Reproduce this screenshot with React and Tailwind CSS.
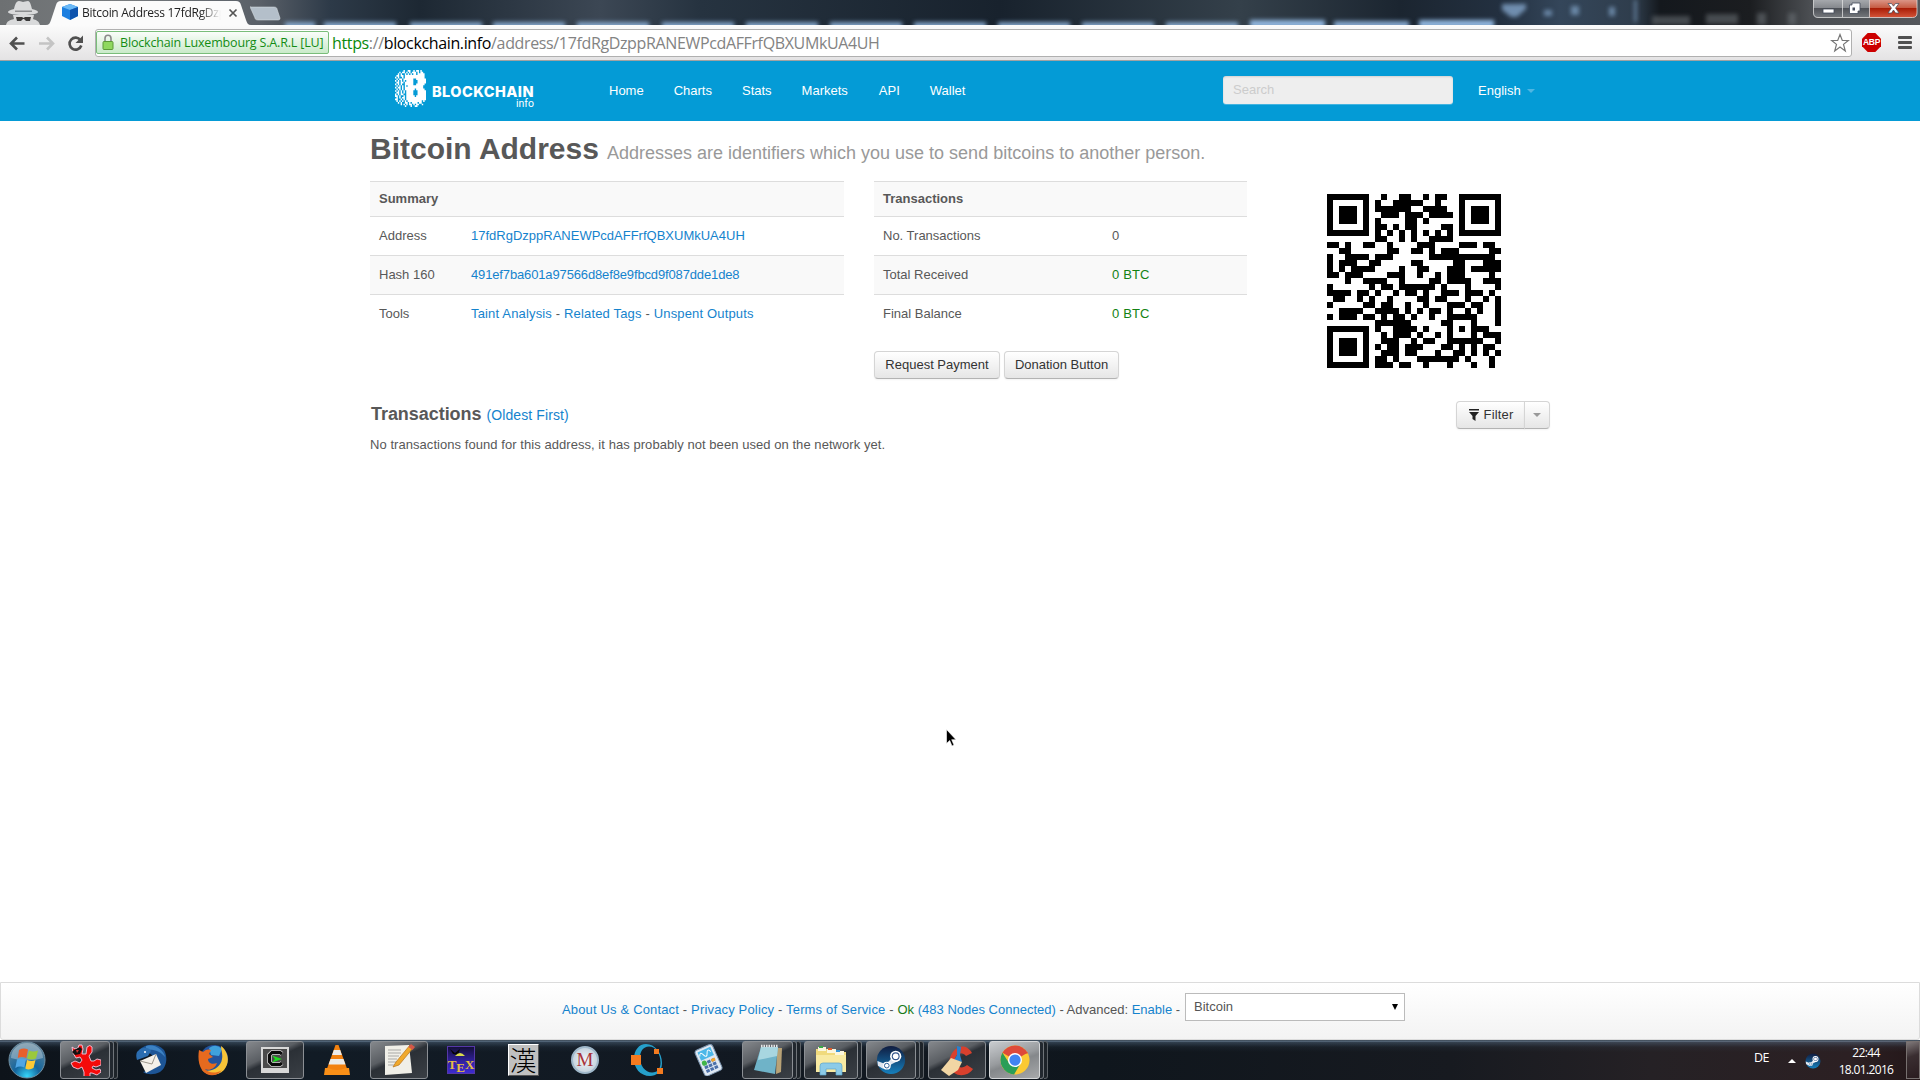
import React from "react";

const ADDRESS = "17fdRgDzppRANEWPcdAFFrfQBXUMkUA4UH";

/* ---------- QR code (version 3, level L, mask 7) ---------- */
function buildQr(text) {
  const N = 29;
  const bits = [];
  const push = (v, n) => {
    for (let i = n - 1; i >= 0; i--) bits.push((v >> i) & 1);
  };
  push(4, 4);
  push(text.length, 8);
  for (const ch of text) push(ch.charCodeAt(0), 8);
  push(0, 4);
  while (bits.length % 8) bits.push(0);
  const data = [];
  for (let i = 0; i < bits.length; i += 8) data.push(parseInt(bits.slice(i, i + 8).join(""), 2));
  for (let pad = 0xec; data.length < 55; pad ^= 0xec ^ 0x11) data.push(pad);

  const mul = (a, b) => {
    let r = 0;
    for (let i = 7; i >= 0; i--) {
      r = (r << 1) ^ ((r >> 7) * 0x11d);
      r ^= ((b >> i) & 1) * a;
    }
    return r;
  };
  const gen = new Array(15).fill(0);
  gen[14] = 1;
  let root = 1;
  for (let i = 0; i < 15; i++) {
    for (let j = 0; j < 15; j++) {
      gen[j] = mul(gen[j], root);
      if (j + 1 < 15) gen[j] ^= gen[j + 1];
    }
    root = mul(root, 2);
  }
  const ecc = new Array(15).fill(0);
  for (const b of data) {
    const f = b ^ ecc.shift();
    ecc.push(0);
    gen.forEach((g, i) => (ecc[i] ^= mul(g, f)));
  }
  const all = data.concat(ecc);

  const m = Array.from({ length: N }, () => new Array(N).fill(0));
  const fixed = Array.from({ length: N }, () => new Array(N).fill(false));
  const set = (x, y, v) => {
    if (x < 0 || y < 0 || x >= N || y >= N) return;
    m[y][x] = v ? 1 : 0;
    fixed[y][x] = true;
  };
  for (let i = 0; i < N; i++) {
    set(6, i, i % 2 === 0);
    set(i, 6, i % 2 === 0);
  }
  for (const [cx, cy] of [[3, 3], [N - 4, 3], [3, N - 4]])
    for (let dy = -4; dy <= 4; dy++)
      for (let dx = -4; dx <= 4; dx++) {
        const d = Math.max(Math.abs(dx), Math.abs(dy));
        set(cx + dx, cy + dy, d !== 2 && d !== 4);
      }
  for (let dy = -2; dy <= 2; dy++)
    for (let dx = -2; dx <= 2; dx++) set(22 + dx, 22 + dy, Math.max(Math.abs(dx), Math.abs(dy)) !== 1);
  const fmt = 0b110100101110110;
  const fb = (i) => (fmt >> i) & 1;
  for (let i = 0; i <= 5; i++) set(8, i, fb(i));
  set(8, 7, fb(6));
  set(8, 8, fb(7));
  set(7, 8, fb(8));
  for (let i = 9; i < 15; i++) set(14 - i, 8, fb(i));
  for (let i = 0; i < 8; i++) set(N - 1 - i, 8, fb(i));
  for (let i = 8; i < 15; i++) set(8, N - 15 + i, fb(i));
  set(8, N - 8, 1);

  let k = 0;
  for (let right = N - 1; right >= 1; right -= 2) {
    if (right === 6) right = 5;
    for (let v = 0; v < N; v++)
      for (let j = 0; j < 2; j++) {
        const x = right - j;
        const y = ((right + 1) & 2) === 0 ? N - 1 - v : v;
        if (fixed[y][x]) continue;
        let b = 0;
        if (k < all.length * 8) b = (all[k >> 3] >> (7 - (k & 7))) & 1;
        k++;
        if ((((x + y) % 2) + ((x * y) % 3)) % 2 === 0) b ^= 1;
        m[y][x] = b;
      }
  }
  return m;
}

function QrCode({ text }) {
  const d = buildQr(text)
    .flatMap((row, y) => row.map((v, x) => (v ? `M${x} ${y}h1v1h-1z` : "")))
    .join("");
  return (
    <svg viewBox="0 0 29 29" className="h-[174px] w-[174px]" shapeRendering="crispEdges">
      <path d={d} fill="#000" />
    </svg>
  );
}

/* ---------- Browser chrome ---------- */
function TitleBar() {
  return (
    <div className="relative h-[25px] shrink-0 overflow-hidden bg-[linear-gradient(90deg,#6d7072_0px,#777b7e_120px,#5a6068_260px,#2d3a48_330px,#1d2833_420px,#3c4754_600px,#263340_700px,#18222d_1000px,#34404a_1240px,#1b2530_1400px,#233040_1500px,#34465a_1560px,#2f3d4c_1635px,#14181d_1660px,#1b1d20_1750px,#4b4e52_1810px,#55585c_1920px)]">
      <svg className="absolute inset-0" width="1920" height="25">
        <defs>
          <filter id="soft" x="-20%" y="-100%" width="140%" height="300%">
            <feGaussianBlur stdDeviation="2" />
          </filter>
        </defs>
        <g filter="url(#soft)" fill="#8fb4dc">
          {[285, 324, 410, 493, 577, 662, 746, 830, 914, 998, 1082, 1166].map((x, i) => (
            <rect key={x} x={x} y="22" width={i === 0 ? 30 : 72} height="8" opacity="0.85" />
          ))}
          <rect x="1250" y="20" width="75" height="8" />
          <rect x="1334" y="21" width="75" height="8" opacity="0.9" />
          <rect x="1419" y="20" width="75" height="8" />
          <path d="M1502 4h24v5l-9 8h-6l-9-7z" opacity="0.7" />
          <rect x="1544" y="10" width="8" height="6" opacity="0.6" />
          <rect x="1571" y="6" width="8" height="9" opacity="0.6" />
          <rect x="1609" y="7" width="6" height="9" opacity="0.6" />
          <rect x="1634" y="0" width="3" height="22" opacity="0.5" />
        </g>
        <g filter="url(#soft)" fill="#6d7378" opacity="0.55">
          <rect x="1652" y="16" width="38" height="9" />
          <rect x="1706" y="14" width="32" height="10" />
          <rect x="1757" y="13" width="9" height="12" />
          <rect x="1788" y="13" width="8" height="12" />
        </g>
        {/* incognito figure */}
        <g fill="#d9dadb">
          <path d="M14 9c1-4 2-8 5-8 2 0 3 1 4 1s3-1 5-1c2 0 3 4 4 8 4 1 6 2 6 3 0 2-7 3-15 3S8 14 8 12c0-1 2-2 6-3z" />
          <path d="M6 25c1-4 4-5 8-6l-1-4h21l-1 4c3 1 6 2 7 6z" />
        </g>
        <path d="M15 10.500h17v1.500H15z" fill="#8b8d8f" />
        <path d="M16 17h6l1.500 1 1.500-1h6l-1 4h-4l-2-2h-1l-2 2h-4z" fill="#3b3b3b" />
        {/* tab */}
        <path d="M46 25c3 0 4-2 5-5l5-15c1-3 2-4 5-4h175c3 0 4 1 5 4l5 15c1 3 2 5 5 5z" fill="#fbfbfb" />
        <path d="M62 7l8-3 8 3v9l-8 4-8-4z" fill="#1c7fe0" />
        <path d="M62 7l8-3 8 3-8 3z" fill="#69b8f6" />
        <path d="M70 10l8-3v9l-8 4z" fill="#0d53ad" />
        <path d="M229.500 9.500l7 7M236.500 9.500l-7 7" stroke="#555" strokeWidth="1.700" />
        {/* new tab */}
        <path d="M250 7h24c2 0 3 1 3 2l3 9c0 1 0 2-2 2h-20c-2 0-3-1-3-2l-4-9c-1-1 0-2 0-2z" fill="#b4bfca" stroke="#dde3e8" strokeOpacity=".5" />
        {/* window buttons */}
        <defs>
          <linearGradient id="wb" x1="0" y1="0" x2="0" y2="1">
            <stop offset="0" stopColor="#a9acb0" />
            <stop offset=".48" stopColor="#85888d" />
            <stop offset=".5" stopColor="#4d5056" />
            <stop offset="1" stopColor="#74777b" />
          </linearGradient>
          <linearGradient id="wr" x1="0" y1="0" x2="0" y2="1">
            <stop offset="0" stopColor="#dd9c8e" />
            <stop offset=".48" stopColor="#c65a42" />
            <stop offset=".5" stopColor="#a81c05" />
            <stop offset="1" stopColor="#d4553a" />
          </linearGradient>
        </defs>
        <path d="M1813.500-1v14q0 4.500 4.500 4.500h51v-18.500z" fill="url(#wb)" />
        <path d="M1869.500-1v18.500h43q4.500 0 4.500-4.500v-14z" fill="url(#wr)" />
        <path d="M1813.500-1v14q0 4.500 4.500 4.500h94.500q4.500 0 4.500-4.500v-14M1842.500 0v17M1869.500 0v17" fill="none" stroke="#e3e3e3" strokeOpacity=".75" />
        <rect x="1823" y="9" width="11" height="4" fill="#fff" stroke="#444b5a" strokeWidth=".8" />
        <path d="M1852 3h8v8h-2v2.500h-8.500v-8.500h2.500z" fill="#fff" stroke="#444b5a" strokeWidth=".8" />
        <rect x="1852.500" y="7.500" width="2.500" height="3" fill="#444b5a" />
        <path d="M1888 3.500h3.500l2 2.700 2-2.700h3.500l-3.500 4.600 3.500 4.900h-3.500l-2-3-2 3h-3.500l3.500-4.900z" fill="#fff" stroke="#444b5a" strokeWidth=".7" />
      </svg>
      <div className="absolute top-[4px] left-[82px] font-['Open_Sans'] text-[12px] leading-[18px] tracking-[-0.28px] whitespace-nowrap text-[#222] [mask-image:linear-gradient(90deg,#000_118px,transparent_139px)]">
        Bitcoin Address 17fdRgDzp
      </div>
    </div>
  );
}

function Toolbar() {
  return (
    <div className="flex h-[36px] shrink-0 items-center border-b border-[#a2a2a2] bg-[linear-gradient(#fbfbfb,#e4e3e4)] pr-[8px]">
      <svg width="95" height="34" className="shrink-0" fill="none" strokeWidth="2.600">
        <path d="M24.500 17.500H11M17 11.500l-6 6 6 6" stroke="#505050" />
        <path d="M39 17.500h13.500M47 11.500l6 6-6 6" stroke="#c4c4c4" />
        <path d="M80.500 14.200a6 6 0 1 0 .8 5.300" stroke="#505050" />
        <path d="M83 9.500v7.500h-7.500z" fill="#505050" />
      </svg>
      <div className="flex h-[28px] w-[1757px] items-center rounded-[3px] border border-[#b0b0b0] bg-white">
        <div className="flex h-[23px] w-[233px] shrink-0 items-center rounded-[2px] border border-[#79bd7a] bg-[linear-gradient(#fafdfa,#c9eac9)]">
          <svg width="12" height="17" className="ml-[5px]">
            <path d="M3 8V4.500a3 3.200 0 0 1 6 0V8" fill="none" stroke="#8b8b8b" strokeWidth="1.600" />
            <rect x="1" y="7.500" width="10" height="8" rx="1" fill="#8fd85f" stroke="#5b9a39" />
          </svg>
          <span className="ml-[6px] pt-px font-['Open_Sans'] text-[12.500px] tracking-[-0.17px] whitespace-nowrap text-[#148c14]">
            Blockchain Luxembourg S.A.R.L [LU]
          </span>
        </div>
        <span className="ml-[3px] pt-px font-['Open_Sans'] text-[16px] leading-[22px] tracking-[-0.36px] whitespace-nowrap text-[#838383]">
          <span className="text-[#0b8a0b]">https</span>://<span className="text-black">blockchain.info</span>/address/{ADDRESS}
        </span>
        <svg width="20" height="20" className="mr-px ml-auto">
          <path d="M10 1.500l2.300 6h6l-4.800 3.900 1.800 6.500L10 14.100l-5.300 3.800 1.800-6.500L1.700 7.500h6z" fill="#fff" stroke="#777" strokeWidth="1.200" />
        </svg>
      </div>
      <div className="ml-[10px] flex h-[19px] w-[19px] items-center justify-center bg-[#cc0000] font-['Liberation_Sans'] text-[8.500px] font-bold tracking-[-0.3px] text-white [clip-path:polygon(30%_0,70%_0,100%_30%,100%_70%,70%_100%,30%_100%,0_70%,0_30%)]">
        ABP
      </div>
      <div className="ml-auto flex w-[14px] flex-col gap-[2px]">
        <div className="h-[3px] rounded-[1px] bg-[#505050]" />
        <div className="h-[3px] rounded-[1px] bg-[#505050]" />
        <div className="h-[3px] rounded-[1px] bg-[#505050]" />
      </div>
    </div>
  );
}

/* ---------- Page ---------- */
const LOGO_ROWS = [
  "......1..11..1.11.1...",
  "...1.11.1.1.111.1.11..",
  "..1.1..1.1.1.11.11111.",
  ".11.11.11111111111111.",
  "1.1..1.11111111111111.",
  ".1.11.1111111..1111111",
  "1.1.1.1.11111...111111",
  ".11.11.111111...111111",
  "1.1.1..111111..111111.",
  ".1.1.1.1.11111111111..",
  "1.11.1.1111111111111..",
  ".1.1.1.1111111.111111.",
  "1.1.1.1.11111...111111",
  ".11.1.1.11111...111111",
  "1.1.11..11111...111111",
  "11.1..1.111111.1111111",
  ".1.1.11.11111111111111",
  "11..1.1.11111111111111",
  ".1.1.1.1.1111111111.1.",
  "..1.1..11.1.1111.11...",
  "....1.1.1.11.1.11..1..",
  ".......1...1..11......",
];

function Logo() {
  const d = LOGO_ROWS.flatMap((r, y) => [...r].map((c, x) => (c === "1" ? `M${x} ${y}h1v1h-1z` : ""))).join("");
  return (
    <div className="flex w-[139px] shrink-0 items-start pt-[9px]">
      <svg viewBox="0 0 22 22" preserveAspectRatio="none" className="h-[37px] w-[31px] shrink-0">
        <path d={d} fill="#fff" />
      </svg>
      <div className="ml-[6px] flex w-[102px] shrink-0 flex-col items-end pt-[14px] text-white">
        <span className="font-['Inter'] text-[14.500px] leading-[15px] font-extrabold tracking-[0.45px]">BLOCKCHAIN</span>
        <span className="mt-[-1px] font-['Roboto'] text-[10.500px] leading-[12px]">info</span>
      </div>
    </div>
  );
}

function Header() {
  return (
    <header className="flex h-[60px] shrink-0 bg-[#049bd6] pl-[395px] text-[13px] text-white">
      <Logo />
      <nav className="flex w-[614px] items-center gap-[30px] pl-[75px] text-[13px]">
        <a>Home</a>
        <a>Charts</a>
        <a>Stats</a>
        <a>Markets</a>
        <a className="ml-px">API</a>
        <a>Wallet</a>
      </nav>
      <div className="mt-[15px] ml-[75px] h-[28px] w-[230px] rounded-[3px] bg-[#eeeeee] pt-[5px] pl-[10px] text-[13px] leading-[18px] text-[#cccccc] shadow-[inset_0_1px_2px_rgba(0,0,0,0.12),0_1px_0_rgba(255,255,255,0.25)]">
        Search
      </div>
      <div className="ml-[25px] flex items-center">
        English
        <span className="ml-[6px] border-x-4 border-t-4 border-x-transparent border-t-[#4fb6e2]" />
      </div>
    </header>
  );
}

const Link = ({ children }) => <a className="text-[#1583cd]">{children}</a>;

function InfoTable({ title, rows, className, labelClass }) {
  return (
    <div className={className}>
      <div className="h-[36px] border-y border-[#dddddd] bg-[#f9f9f9] pl-[9px] leading-[33px] font-bold">{title}</div>
      {rows.map(([label, value], i) => (
        <div
          key={label}
          className={
            i === 1
              ? "flex h-[40px] border-y border-[#dddddd] bg-[#f9f9f9] pl-[9px] leading-[37px]"
              : "flex h-[38px] pl-[9px] leading-[38px]"
          }
        >
          <div className={labelClass}>{label}</div>
          <div>{value}</div>
        </div>
      ))}
    </div>
  );
}

const BTN =
  "flex h-[28px] items-center justify-center rounded-[4px] border border-[#d5d5d5] border-b-[#b3b3b3] bg-[linear-gradient(#ffffff,#e6e6e6)] text-[13px] text-[#333] shadow-[0_1px_2px_rgba(0,0,0,0.05)]";

function Main() {
  return (
    <main className="h-[861px] shrink-0 bg-white px-[370px] pt-[8px] text-[13px] text-[#585858]">
      <div className="flex h-[52px] items-baseline gap-[8px] whitespace-nowrap">
        <h1 className="text-[30px] leading-[40px] font-bold">Bitcoin Address</h1>
        <span className="text-[18px] text-[#999999]">
          Addresses are identifiers which you use to send bitcoins to another person.
        </span>
      </div>
      <div className="flex h-[220px]">
        <InfoTable
          className="w-[474px]"
          labelClass="w-[92px]"
          title="Summary"
          rows={[
            ["Address", <Link>{ADDRESS}</Link>],
            ["Hash 160", <span className="tracking-[-0.14px]"><Link>491ef7ba601a97566d8ef8e9fbcd9f087dde1de8</Link></span>],
            ["Tools", <span className="tracking-[0.16px]"><Link>Taint Analysis</Link> - <Link>Related Tags</Link> - <Link>Unspent Outputs</Link></span>],
          ]}
        />
        <div className="ml-[30px] w-[373px]">
          <InfoTable
            labelClass="w-[229px]"
            title="Transactions"
            rows={[
              ["No. Transactions", "0"],
              ["Total Received", <span className="tracking-[0.15px] text-[#138213]">0 BTC</span>],
              ["Final Balance", <span className="tracking-[0.15px] text-[#138213]">0 BTC</span>],
            ]}
          />
          <div className="mt-[18px] flex gap-[4px]">
            <button className={BTN + " w-[126px]"}>Request Payment</button>
            <button className={BTN + " w-[115px]"}>Donation Button</button>
          </div>
        </div>
        <div className="mt-[13px] ml-[80px]">
          <QrCode text={ADDRESS} />
        </div>
      </div>
      <div className="flex h-[29px] items-start">
        <h3 className="pl-px text-[18px] leading-[27px] font-bold tracking-[-0.05px]">Transactions</h3>
        <span className="ml-[5px] pt-[2px] text-[14px] leading-[24px] tracking-[0.1px]">
          <Link>(Oldest First)</Link>
        </span>
        <div className="ml-auto flex">
          <button className={BTN + " w-[69px] gap-[4px] rounded-r-none tracking-[0.15px]"}>
            <svg width="12" height="12">
              <path d="M1 0h10v1.500H1zM1 3h10L7.500 7v5l-3-2V7z" fill="#222" />
            </svg>
            Filter
          </button>
          <button className={BTN + " -ml-px w-[26px] rounded-l-none"}>
            <span className="border-x-4 border-t-4 border-x-transparent border-t-[#999]" />
          </button>
        </div>
      </div>
      <p className="mt-[6px] leading-[18px] tracking-[0.055px]">
        No transactions found for this address, it has probably not been used on the network yet.
      </p>
    </main>
  );
}

function Footer() {
  return (
    <footer className="flex h-[58px] shrink-0 items-start rounded-b-[3px] border border-[#dcdcdc] bg-[linear-gradient(#ffffff,#f3f3f3)] pt-[10px] pl-[561px] text-[13px] text-[#555]">
      <div className="w-[623px] pt-[7px] leading-[20px] whitespace-nowrap">
        <span className="tracking-[0.16px]">
          <Link>About Us &amp; Contact</Link> - <Link>Privacy Policy</Link> - <Link>Terms of Service</Link> -{" "}
        </span>
        <span className="text-[#197b19]">Ok</span> <Link>(483 Nodes Connected)</Link> - Advanced: <Link>Enable</Link> -
      </div>
      <div className="flex h-[28px] w-[220px] items-center border border-[#bbbbbb] bg-white pr-[6px] pl-[8px]">
        Bitcoin
        <span className="ml-auto border-x-[3.500px] border-t-[6px] border-x-transparent border-t-black" />
      </div>
    </footer>
  );
}

/* ---------- Taskbar ---------- */
function TaskButton({ className, stack = 0, active, children }) {
  return (
    <div className={"flex h-[38px] shrink-0 " + className}>
      <div
        className={
          "flex flex-1 items-center justify-center rounded-[3px] border " +
          (active
            ? "border-[#d5d7d9] bg-[linear-gradient(160deg,#c9cccf,#989b9e_45%,#85888b_55%,#a6a8aa)]"
            : "border-[#8b8f94] bg-[linear-gradient(155deg,#85888c,#5a5e63_38%,#2b3036_48%,#3a3f45)]")
        }
      >
        {children}
      </div>
      {stack > 0 && <div className="w-[4px] rounded-r-[3px] border-y border-r border-[#6f7479] bg-[#22282f]" />}
      {stack > 1 && <div className="w-[4px] rounded-r-[3px] border-y border-r border-[#5c6166] bg-[#1d2329]" />}
    </div>
  );
}

const Slot = ({ className, children }) => (
  <div className={"flex h-[38px] shrink-0 items-center justify-center " + className}>{children}</div>
);

const Ico = ({ children, s = 32 }) => (
  <svg width={s} height={s} viewBox="0 0 32 32" className="shrink-0">
    {children}
  </svg>
);

const Steam = ({ s, id }) => (
  <Ico s={s}>
    <defs>
      <linearGradient id={id} x1="0" y1="0" x2="0" y2="1">
        <stop offset="0" stopColor="#101c40" />
        <stop offset="1" stopColor="#1680bd" />
      </linearGradient>
    </defs>
    <circle cx="16" cy="16" r="15" fill={`url(#${id})`} />
    <path d="M1.500 17l9 3.500 5-5 2-5 7 6-8 4-4.500 4.500-5 0-5-3z" fill="#dfe6ef" />
    <circle cx="21" cy="12" r="6" fill="#fff" />
    <circle cx="21" cy="12" r="4.200" fill="#33558a" />
    <circle cx="21" cy="12" r="3" fill="#fff" />
    <circle cx="11.500" cy="22" r="4.200" fill="#fff" />
    <circle cx="11.500" cy="22" r="2.500" fill="none" stroke="#23568f" />
  </Ico>
);

function Taskbar() {
  return (
    <div className="flex h-[40px] shrink-0 items-start bg-[linear-gradient(180deg,#1a232c_0px,rgba(140,165,190,0.75)_1px,rgba(90,115,140,0.45)_2px,rgba(60,80,100,0.15)_7px,transparent_12px),linear-gradient(90deg,#0d131a_0px,#111b25_300px,#121922_700px,#0f161d_1100px,#171a20_1450px,#252125_1650px,#2c2023_1850px,#241719_1920px)] pt-px">
      <Slot className="w-[54px]">
        <svg width="38" height="38" viewBox="0 0 38 38">
          <defs>
            <radialGradient id="orb" cx=".5" cy=".95" r=".9">
              <stop offset="0" stopColor="#35d6fa" />
              <stop offset=".4" stopColor="#14659d" />
              <stop offset="1" stopColor="#5f8399" />
            </radialGradient>
          </defs>
          <circle cx="19" cy="19" r="18" fill="url(#orb)" stroke="#6f8ea1" />
          <path d="M3 17a16 15 0 0 1 32 0q-16 5-32 0z" fill="#fff" opacity=".3" />
          <path d="M11 9q4.500-2.500 9-.5l-1.700 8.500q-4.500-2-8.500 0z" fill="#e8602c" />
          <path d="M21 9.500q4.500 2 9 0l-2 8q-4.500 2-9 0z" fill="#9bc93c" />
          <path d="M9 18.500q4.500-2 9 0l-1.700 8q-4.500-2-9 .5z" fill="#4fa6e4" />
          <path d="M19 19q4.500 2 8.500 0l-2 8q-4.500 2.500-8.200.5z" fill="#fcc935" />
        </svg>
      </Slot>
      <TaskButton className="ml-[6px] w-[58px]" stack={2}>
        <Ico>
          <path
            d="M3 3l3 2 3-1 1-3h3l1 4-1 5 4 0 1-7q3-3 5 0l0 5-3 4 2 5 3 0 3-2 4 1 0 5-5 2-3-1-1 2 4 2 4-1 1 3-4 3-5-2-2 0 0 5q-3 3-6 0l0-6-2-5-4 2-5-2-2-4 4-2 5 2 2-3-2-3-4 1-3-5z"
            fill="#f50a0a"
            stroke="#f4c9e0"
            strokeWidth=".9"
          />
          <path d="M5 6l6-3 2 2-2 5-5 1-3-3z" fill="#111" />
          <path d="M7 6l3 0-2 3z" fill="#c33" />
        </Ico>
      </TaskButton>
      <Slot className="ml-[15px] w-[38px]">
        <Ico>
          <path d="M3 6C10-1 22-1 28 6c4 7 3 17-4 22-6 3-13 3-17 0l12-4C24 14 12 6 3 6z" fill="#1d5596" />
          <path d="M10 2c8-3 18 4 19 11-5-6-11-8-19-7z" fill="#3c82c4" />
          <path d="M4 17l16-7 5 11-15 8z" fill="#f4f1ea" />
          <path d="M4 17l12 3 4-10" fill="none" stroke="#9b968b" />
          <path d="M1 8c4-5 11-6 14-1l-3 5-11 4c-1-3-1-6 0-8z" fill="#2b6db0" />
          <circle cx="9" cy="8" r="1" fill="#fff" />
        </Ico>
      </Slot>
      <Slot className="ml-[23px] w-[38px]">
        <Ico>
          <circle cx="17" cy="15" r="14" fill="#23539d" />
          <path d="M12 4q7-5 13 1l-3 7-8-1z" fill="#3fa1dc" />
          <path d="M24 2c8 6 9 17 3 24-7 7-17 6-22 0 10 3 19-3 20-11 1-5-1-9-1-13z" fill="#f8c437" />
          <path d="M2 6l4 2c3-3 6-3 8-2l-2 4 4 3-5 2c0 4 4 6 9 4-2 6-8 8-12 6 3 4 11 5 17 1-5 7-15 7-20 0-4-6-4-14-3-20z" fill="#e66a1f" />
        </Ico>
      </Slot>
      <TaskButton className="ml-[14px] w-[58px]">
        <Ico>
          <path d="M2 3h28v26H2z" fill="#d8d8d8" />
          <rect x="4" y="5" width="24" height="19" fill="#4b4b4b" />
          <path d="M23 10l-2-1.500h-8l-2.500 2.500v7l2.500 2.500h8l2-1.500" fill="none" stroke="#d5d5d5" strokeWidth="4.500" />
          <path d="M23 10l-2-1.500h-8l-2.500 2.500v7l2.500 2.500h8l2-1.500" fill="none" stroke="#0a0a0a" strokeWidth="3" />
          <path d="M13 11.500l10 3.500-10 3.500 3-3.500z" fill="#1ddc1d" />
        </Ico>
      </TaskButton>
      <Slot className="ml-[13px] w-[40px]">
        <Ico>
          <path d="M14.500 1h3l9 25h-21z" fill="#f2810f" />
          <path d="M12.800 6h6.400l1.700 5h-9.800zM9.500 15h13l2 5.500h-17z" fill="#ecebe9" />
          <path d="M4 24h3q9 4 18 0h3l1 7H3z" fill="#f98f17" />
        </Ico>
      </Slot>
      <TaskButton className="ml-[13px] w-[58px]">
        <Ico>
          <path d="M2 2l24-1 3 28-27 2z" fill="#f0efe8" />
          <path d="M5 6h13M5 9h13M5 12h11M5 15h9M5 18h8M5 21h6" stroke="#a9a9a6" />
          <path d="M13 18L27 1l3 3-14 17-6 2z" fill="#f0a92c" stroke="#b8741b" strokeWidth=".7" />
          <path d="M25.500 3L28 0l4 3-2.500 3z" fill="#d45848" />
        </Ico>
      </TaskButton>
      <Slot className="ml-[14px] w-[38px]">
        <div className="relative flex h-[28px] w-[28px] items-end justify-center border border-[#5537a8] bg-[linear-gradient(#15103a,#3322a8_60%,#3c2bd0)] font-['Liberation_Serif'] text-[13px] leading-[16px] font-bold text-[#e5bd42]">
          <svg width="26" height="12" className="absolute top-0 left-0">
            <path d="M2 2l5 4 5-4-2 6-5-1z" fill="#050505" />
            <path d="M7 9q5-6 10 0z" fill="#d9dc4d" />
          </svg>
          T<span className="translate-y-[3px]">E</span>X
        </div>
      </Slot>
      <Slot className="ml-[24px] w-[38px]">
        <div className="flex h-[32px] w-[31px] items-center justify-center border border-t-white border-r-[#555] border-b-[#555] border-l-white bg-[#c0c0c0] font-['Noto_Sans_CJK_JP',sans-serif] text-[27px] leading-[30px] font-light text-black">
          漢
        </div>
      </Slot>
      <Slot className="ml-[24px] w-[38px]">
        <div className="flex h-[28px] w-[28px] items-center justify-center rounded-full border-2 border-[#9fb7c9] bg-[radial-gradient(#f4f6f8,#b4c6d4)] font-['Liberation_Serif'] text-[19px] text-[#a8323a]">
          M
        </div>
      </Slot>
      <Slot className="ml-[24px] w-[38px]">
        <Ico>
          <path fillRule="evenodd" d="M15 0C24 0 31 9 31 19c0 9-6 13-12 13C9 32 3 24 3 15 3 6 8 0 15 0zM18 2.500c-6 0-9 5-9 11 0 8 5 15 12 15 6 0 8.500-4 8.500-10C29.500 10 25 2.500 18 2.500z" fill="#26a0cb" />
          <rect x="0" y="11" width="10" height="10" fill="#f47b20" />
          <rect x="23" y="5" width="5" height="5" fill="#f47b20" />
          <rect x="26" y="24" width="6" height="6" fill="#f47b20" />
        </Ico>
      </Slot>
      <Slot className="ml-[24px] w-[38px]">
        <Ico>
          <g transform="rotate(-24 16 16)">
            <rect x="6" y="2" width="19" height="28" rx="3" fill="#dfe8f2" stroke="#7a93ad" />
            <rect x="8.500" y="4.500" width="14" height="9" fill="#4cb7e8" />
            <path d="M9 9q2-5 4 0t4 0 4 0" fill="none" stroke="#fff" />
            <g fill="#4a6fa8">
              {[16, 20, 24].flatMap((y) => [9, 13.5, 18].map((x) => <rect key={x + "-" + y} x={x} y={y} width="3.500" height="3" />))}
            </g>
            <circle cx="10.500" cy="17" r="2.500" fill="#41b649" />
            <rect x="18" y="16" width="4" height="3" fill="#f3a42a" />
          </g>
        </Ico>
      </Slot>
      <TaskButton className="ml-[14px] w-[59px]" stack={2}>
        <Ico>
          <path d="M25 4l5 0-1 24-5 2z" fill="#b8a276" />
          <path d="M9 3h17l-3 27L2 26z" fill="#6fb3c8" />
          <path d="M9 3h17l-1 9-19 4z" fill="#a8d6e0" />
          <path d="M9 2h17" stroke="#e4e4e4" strokeWidth="2.500" strokeDasharray="1.500 1" />
        </Ico>
      </TaskButton>
      <TaskButton className="ml-[3px] w-[58px]" stack={1}>
        <Ico>
          <path d="M1 5h11l2 3h17v20H1z" fill="#f0da7c" />
          <path d="M3 3h8v4H3zM12 5h9v4h-9zM20 7h9v4h-9z" fill="#fbf6dd" />
          <rect x="4" y="2" width="4" height="2" fill="#3aa946" />
          <rect x="13" y="4" width="4" height="2" fill="#dc5a2b" />
          <rect x="21" y="6" width="4" height="2" fill="#3695d8" />
          <path d="M1 11h30v17H1z" fill="#f8eaa2" />
          <path d="M5 31V22q0-3 3-3h16q3 0 3 3v9h-6v-6H11v6z" fill="#8ccbe8" stroke="#5ba5ca" strokeWidth=".7" />
        </Ico>
      </TaskButton>
      <TaskButton className="ml-[4px] w-[58px]" stack={2}>
        <Steam s={30} id="st1" />
      </TaskButton>
      <TaskButton className="ml-[4px] w-[58px]">
        <Ico>
          <path d="M31 9l-6 3c-5-6-12-1-11 6 1 6 8 7 12 3l6 4c-6 9-20 8-23-2C5 8 22-6 31 9z" fill="#d8402d" />
          <path d="M16 2l4 1-1 8 2 7-8-2 3-5z" fill="#2a80cc" />
          <path d="M10 14l11 4-4 8-9 6L0 26z" fill="#f2d6a4" />
        </Ico>
      </TaskButton>
      <TaskButton className="ml-[3px] w-[59px]" stack={2} active>
        <Ico s={30}>
          <circle cx="16" cy="16" r="15.500" fill="#fbc933" />
          <path d="M16 16L2.600 8.200A15.500 15.500 0 0 1 29.400 8.200z" fill="#de4a3a" />
          <path d="M2.600 8.200A15.500 15.500 0 0 0 15 31.400L22 19.500 9 18z" fill="#2a9e57" />
          <path d="M16 8.500H29.600" stroke="#de4a3a" strokeWidth="1" />
          <circle cx="16" cy="16" r="7.500" fill="#fff" />
          <circle cx="16" cy="16" r="6" fill="#4284f0" />
        </Ico>
      </TaskButton>
      <div className="ml-auto flex text-white">
        <span className="mt-[8px] w-[34px] font-['Open_Sans'] text-[12.500px] leading-[18px] tracking-[-0.6px]">DE</span>
        <span className="mt-[18px] h-0 border-x-4 border-b-4 border-x-transparent border-b-white" />
        <span className="mt-[12px] ml-[9px]">
          <Steam s={16} id="st2" />
        </span>
        <div className="ml-[17px] flex w-[56px] flex-col items-center pt-[3px] font-['Open_Sans'] text-[12px] leading-[17px] tracking-[-0.65px] whitespace-nowrap">
          <span>22:44</span>
          <span>18.01.2016</span>
        </div>
        <div className="ml-[12px] h-[38px] w-[14px] border border-[#77706f] bg-[linear-gradient(160deg,#80797a,#3a2e31_40%,#2a1c1f)]" />
      </div>
    </div>
  );
}

export default function App() {
  return (
    <div className="relative flex h-[1080px] w-[1920px] flex-col overflow-hidden font-['Liberation_Sans',Arial,sans-serif]">
      <TitleBar />
      <Toolbar />
      <Header />
      <Main />
      <Footer />
      <Taskbar />
      <svg className="absolute top-[729px] left-[946px]" width="12" height="19">
        <path d="M.5.5v14l3.200-3 2.300 5.500 2-.9-2.300-5.400h4.300z" fill="#000" stroke="#fff" strokeWidth=".6" />
      </svg>
    </div>
  );
}
